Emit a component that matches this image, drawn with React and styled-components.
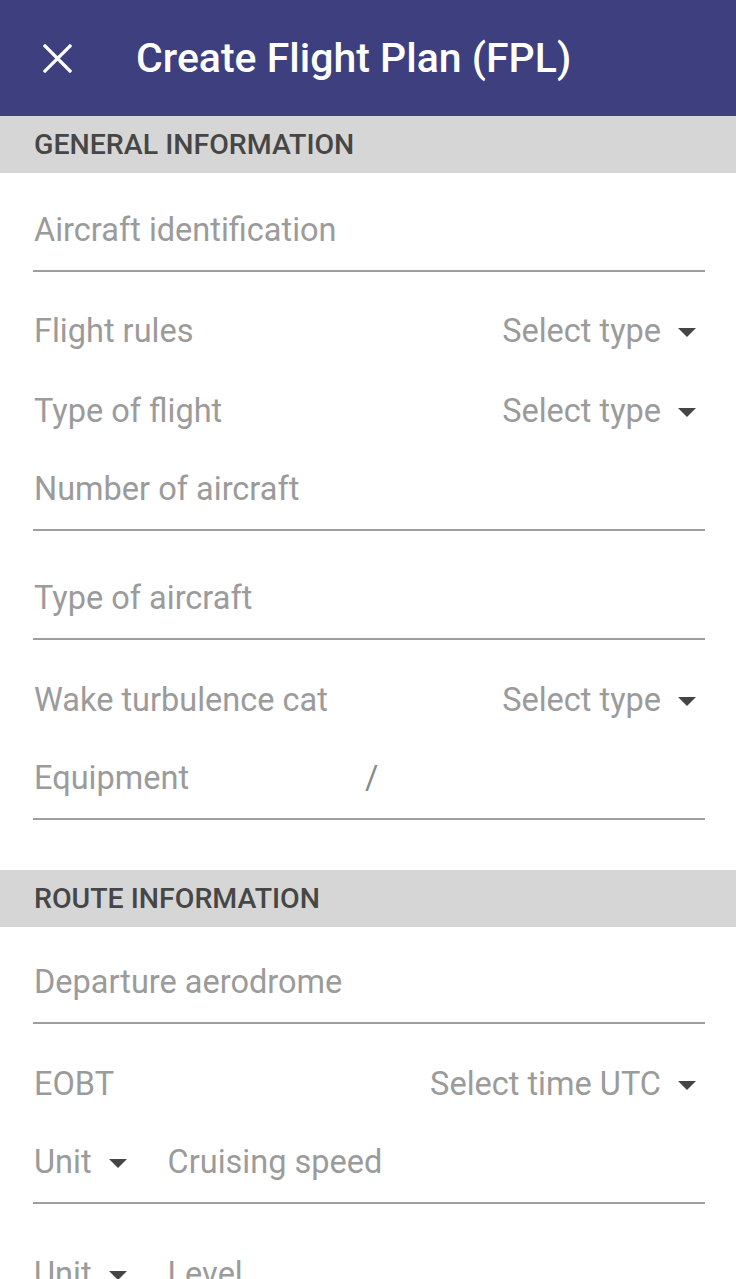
import React from 'react';
import styled, { createGlobalStyle } from 'styled-components';

const GlobalStyle = createGlobalStyle`
  html, body {
    margin: 0;
    padding: 0;
    background: #ffffff;
  }
  body {
    font-family: Roboto, "Noto Sans", "Liberation Sans", sans-serif;
    -webkit-font-smoothing: antialiased;
  }
  * { box-sizing: border-box; }
`;

const Page = styled.div`
  width: 736px;
  background: #fff;
`;

const TopBar = styled.header`
  height: 116px;
  background: #3d3f7e;
  display: flex;
  align-items: center;
  padding-left: 43px;
  gap: 64px;
`;

const CloseButton = styled.button`
  width: 29px;
  height: 29px;
  border: none;
  background: none;
  padding: 0;
  display: flex;
  cursor: pointer;
`;

const Title = styled.h1`
  margin: 0;
  color: #fff;
  font-size: 41px;
  font-weight: 500;
`;

const SectionHead = styled.div`
  height: 57px;
  background: #d6d6d6;
  display: flex;
  align-items: center;
  padding-left: 34px;
  margin-top: ${p => p.$top || 0}px;
  font-size: 28.5px;
  font-weight: 500;
  color: #464646;
`;

const Body = styled.div`
  padding: 0 31px 0 33px;
`;

const Row = styled.div`
  height: 80px;
  margin-top: ${p => p.$top || 0}px;
  display: flex;
  align-items: center;
  gap: ${p => p.$gap || 0}px;
  border-bottom: ${p => (p.$line ? '2px solid #9e9e9e' : 'none')};
  padding: ${p => (p.$line ? '0 0 2px 1px' : '0 9px 0 1px')};
  font-size: 32.5px;
  color: #9b9b9b;
`;

const Label = styled.span`
  flex: ${p => (p.$grow ? 1 : 'none')};
  width: ${p => (p.$w ? `${p.$w}px` : 'auto')};
  white-space: nowrap;
`;

const Picker = styled.span`
  display: flex;
  align-items: center;
  gap: ${p => p.$gap || 17}px;
  white-space: nowrap;
`;

const Caret = styled.span`
  width: 0;
  height: 0;
  border-left: 9px solid transparent;
  border-right: 9px solid transparent;
  border-top: 9px solid #454545;
  margin-top: 2px;
`;

const Slash = styled.span`
  color: #8a8a8a;
`;

const fields = [
  { kind: 'input', label: 'Aircraft identification', top: 19 },
  { kind: 'select', label: 'Flight rules', value: 'Select type', top: 19 },
  { kind: 'select', label: 'Type of flight', value: 'Select type' },
  { kind: 'input', label: 'Number of aircraft' },
  { kind: 'input', label: 'Type of aircraft', top: 29 },
  { kind: 'select', label: 'Wake turbulence cat', value: 'Select type', top: 20 },
  { kind: 'equipment', label: 'Equipment' },
];

const routeFields = [
  { kind: 'input', label: 'Departure aerodrome', top: 17 },
  { kind: 'select', label: 'EOBT', value: 'Select time UTC', top: 20 },
  { kind: 'unit', label: 'Cruising speed' },
  { kind: 'unit', label: 'Level', top: 32 },
  { kind: 'input', label: 'Route', top: 20 },
];

const CloseIcon = () => (
  <svg width="29" height="29" viewBox="0 0 29 29">
    <path d="M2 2 L27 27 M27 2 L2 27" stroke="#fff" strokeWidth="3.2" strokeLinecap="square" />
  </svg>
);

const Field = ({ f }) => {
  if (f.kind === 'select') {
    return (
      <Row $top={f.top}>
        <Label $grow>{f.label}</Label>
        <Picker>
          {f.value}
          <Caret />
        </Picker>
      </Row>
    );
  }
  if (f.kind === 'equipment') {
    return (
      <Row $line $top={f.top}>
        <Label $w={331}>{f.label}</Label>
        <Slash>/</Slash>
      </Row>
    );
  }
  if (f.kind === 'unit') {
    return (
      <Row $line $top={f.top} $gap={41}>
        <Picker $gap={17}>
          Unit
          <Caret />
        </Picker>
        <Label>{f.label}</Label>
      </Row>
    );
  }
  return (
    <Row $line $top={f.top}>
      <Label>{f.label}</Label>
    </Row>
  );
};

const App = () => {
  return (
    <Page>
      <GlobalStyle />
      <TopBar>
        <CloseButton aria-label="Close">
          <CloseIcon />
        </CloseButton>
        <Title>Create Flight Plan (FPL)</Title>
      </TopBar>

      <SectionHead>GENERAL INFORMATION</SectionHead>
      <Body>
        {fields.map((f, i) => (
          <Field key={i} f={f} />
        ))}
      </Body>

      <SectionHead $top={50}>ROUTE INFORMATION</SectionHead>
      <Body>
        {routeFields.map((f, i) => (
          <Field key={i} f={f} />
        ))}
      </Body>
    </Page>
  );
};

export default App;
